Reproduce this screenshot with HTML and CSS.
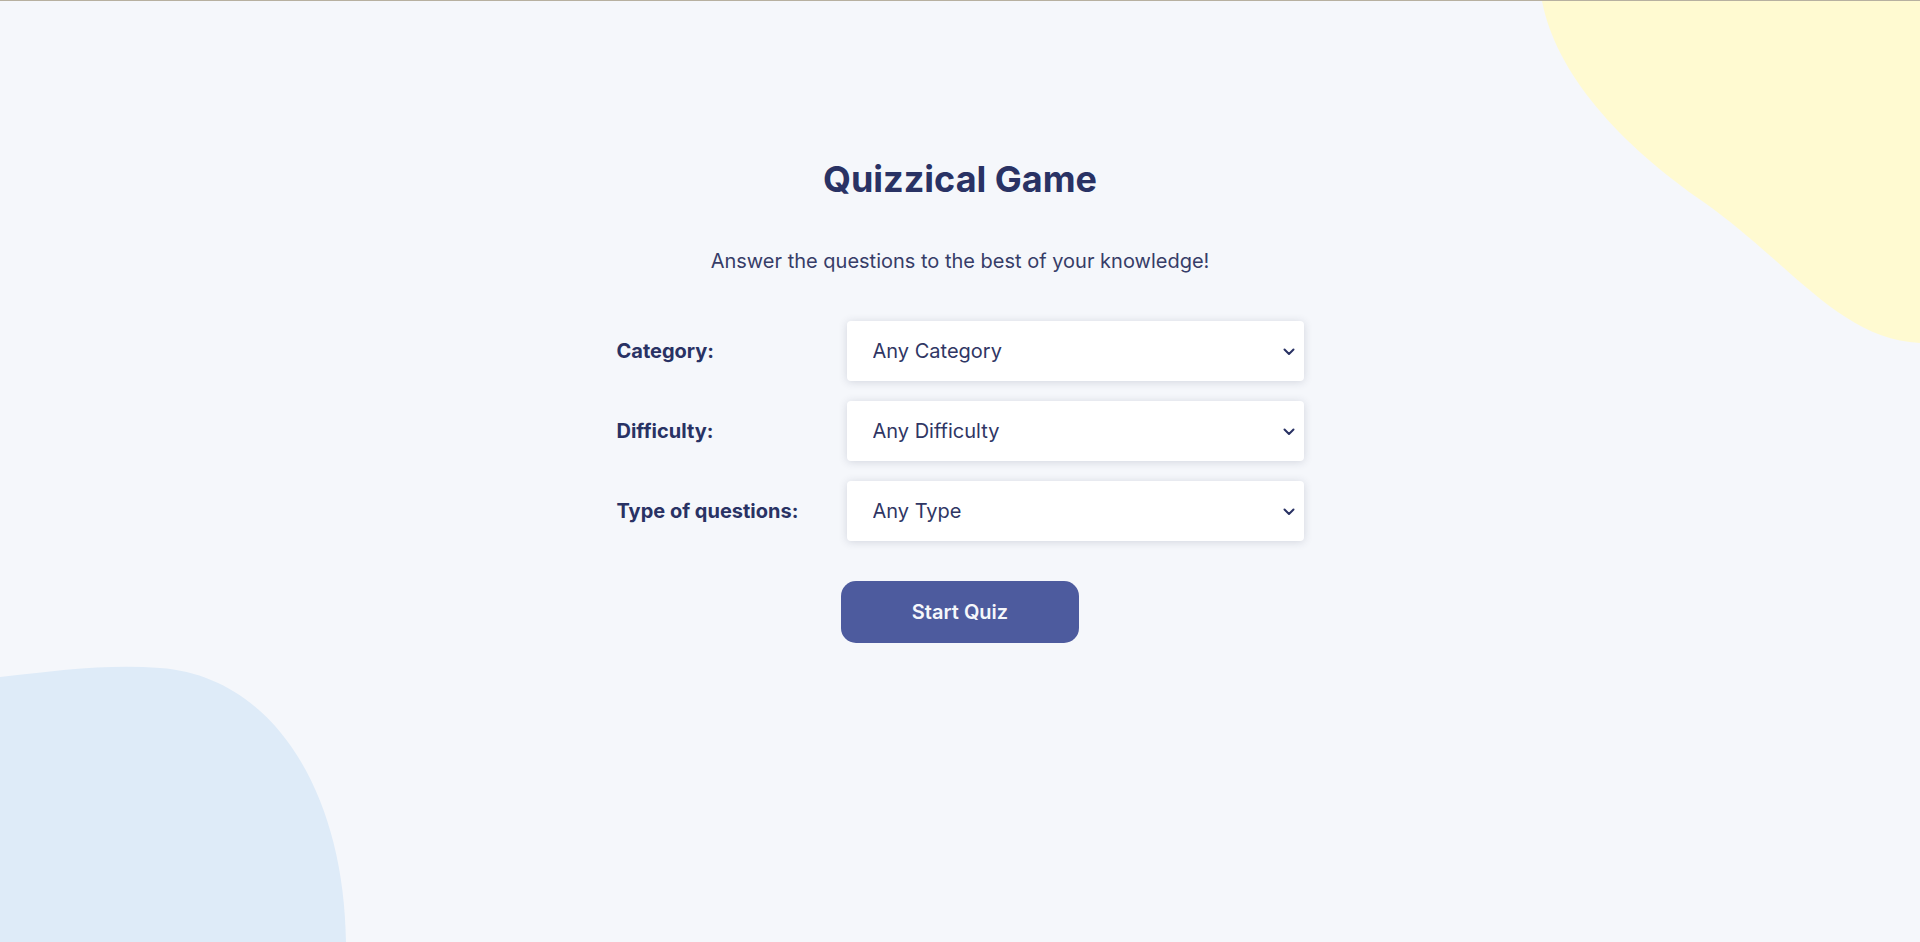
FILE: index.html
```html
<!DOCTYPE html>
<html lang="en">
<head>
<meta charset="utf-8">
<title>Quizzical Game</title>
<link rel="stylesheet" href="styles.css">
</head>
<body>
<div class="page">
  <svg class="blob blob-yellow" width="380" height="345" viewBox="0 0 380 345" aria-hidden="true">
    <path d="M2,0 C16,72 78,142 165,202 C252,264 300,338 380,342 V0 Z" fill="#FFFAD1"/>
  </svg>
  <svg class="blob blob-blue" width="347" height="282" viewBox="0 0 347 282" aria-hidden="true">
    <path d="M0,17 C60,10 110,4 160,8 C272,16 344,130 346,282 H0 Z" fill="#DEEBF8"/>
  </svg>
  <main class="intro">
    <h1 class="title">Quizzical Game</h1>
    <p class="subtitle">Answer the questions to the best of your knowledge!</p>
    <form class="options">
      <label class="opt-label" for="category">Category:</label>
      <div class="select-wrap">
        <select id="category" class="opt-select"><option>Any Category</option></select>
        <svg class="chev" width="12" height="8" viewBox="0 0 12 8"><path d="M1.5,1.5 L6,6 L10.5,1.5" fill="none" stroke="#293264" stroke-width="2" stroke-linecap="round" stroke-linejoin="round"/></svg>
      </div>
      <label class="opt-label" for="difficulty">Difficulty:</label>
      <div class="select-wrap">
        <select id="difficulty" class="opt-select"><option>Any Difficulty</option></select>
        <svg class="chev" width="12" height="8" viewBox="0 0 12 8"><path d="M1.5,1.5 L6,6 L10.5,1.5" fill="none" stroke="#293264" stroke-width="2" stroke-linecap="round" stroke-linejoin="round"/></svg>
      </div>
      <label class="opt-label" for="type">Type of questions:</label>
      <div class="select-wrap">
        <select id="type" class="opt-select"><option>Any Type</option></select>
        <svg class="chev" width="12" height="8" viewBox="0 0 12 8"><path d="M1.5,1.5 L6,6 L10.5,1.5" fill="none" stroke="#293264" stroke-width="2" stroke-linecap="round" stroke-linejoin="round"/></svg>
      </div>
    </form>
    <button class="start-btn" type="button">Start Quiz</button>
  </main>
</div>
</body>
</html>
```

FILE: styles.css
```css
* { box-sizing: border-box; }
html, body { margin: 0; padding: 0; }
body {
  background: #F5F7FB;
  font-family: Inter, "Noto Sans", sans-serif;
  color: #293264;
  overflow: hidden;
}
.page {
  position: relative;
  width: 1920px;
  height: 942px;
  border-top: 1px solid #b7b0a0;
  overflow: hidden;
}
.blob { position: absolute; display: block; }
.blob-yellow { top: 0; right: 0; }
.blob-blue { left: 0; bottom: 0; }
.intro {
  position: relative;
  display: flex;
  flex-direction: column;
  align-items: center;
  padding-top: 156px;
}
.title {
  margin: 0;
  font-size: 36px;
  line-height: 44px;
  font-weight: 700;
  color: #293264;
}
.subtitle {
  margin: 48px 0 0;
  font-size: 20px;
  line-height: 24px;
  font-weight: 400;
  color: #373d68;
}
.options {
  margin-top: 48px;
  width: 687px;
  display: grid;
  grid-template-columns: 230px 457px;
  row-gap: 20px;
  align-items: center;
}
.opt-label {
  font-size: 20px;
  font-weight: 700;
  color: #293264;
}
.select-wrap { position: relative; height: 60px; }
.opt-select {
  appearance: none;
  -webkit-appearance: none;
  width: 100%;
  height: 60px;
  border: none;
  border-radius: 4px;
  background: #ffffff;
  box-shadow: 0 1px 9px rgba(40, 45, 80, 0.17);
  padding: 0 40px 0 26px;
  font-family: Inter, "Noto Sans", sans-serif;
  font-size: 20px;
  color: #2f3664;
}
.chev {
  position: absolute;
  right: 9px;
  top: 27px;
  pointer-events: none;
}
.start-btn {
  margin-top: 40px;
  width: 238px;
  height: 62px;
  border: none;
  border-radius: 15px;
  background: #4D5B9E;
  color: #F5F7FB;
  font-family: Inter, "Noto Sans", sans-serif;
  font-size: 20px;
  font-weight: 600;
}
```
